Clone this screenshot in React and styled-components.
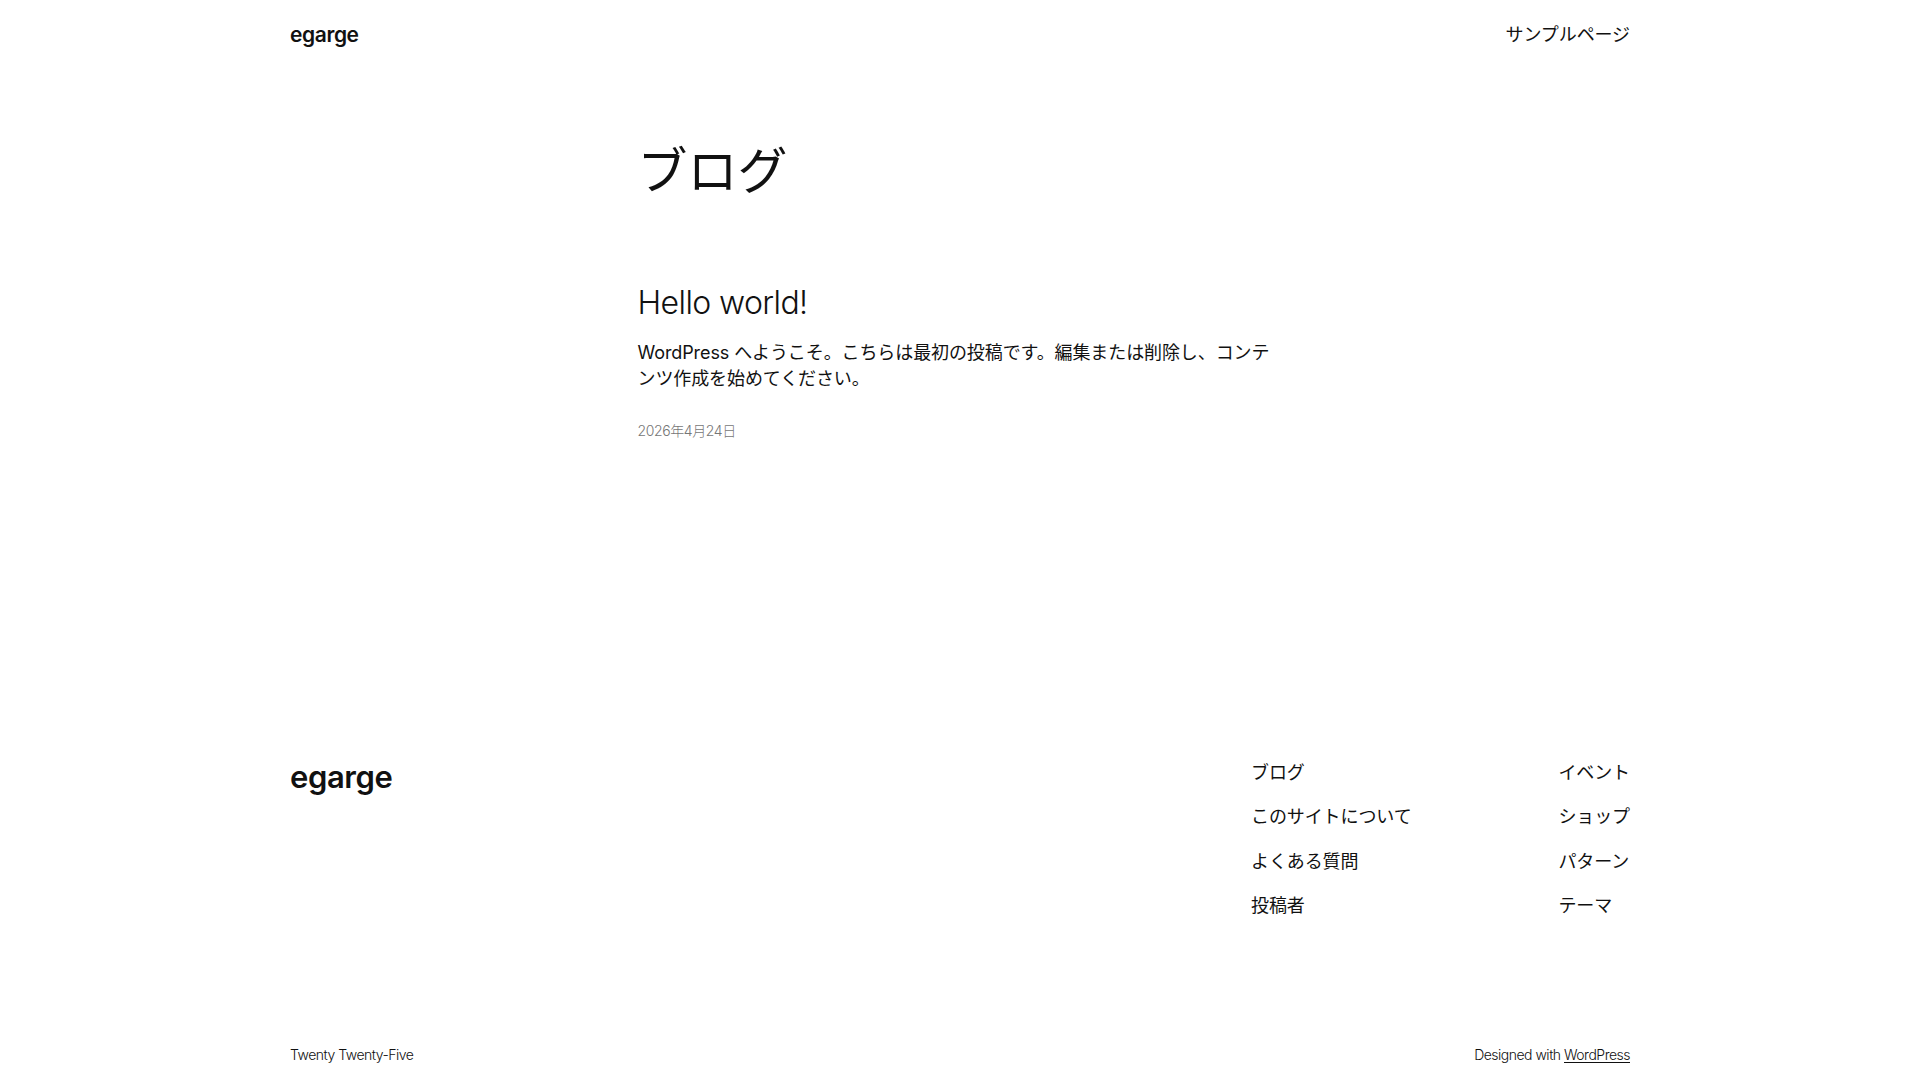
import React from 'react';
import styled, { createGlobalStyle } from 'styled-components';

const GlobalStyle = createGlobalStyle`
  html, body {
    margin: 0;
    padding: 0;
    background: #ffffff;
  }
  body {
    font-family: Inter, "Noto Sans CJK JP", sans-serif;
    font-weight: 300;
    color: #111111;
    -webkit-font-smoothing: antialiased;
  }
  a {
    color: inherit;
    text-decoration: none;
  }
`;

const Page = styled.div`
  min-height: 100vh;
  display: flex;
  flex-direction: column;
`;

const Wide = styled.div`
  width: 1340px;
  margin: 0 auto;
`;

const Header = styled(Wide)`
  display: flex;
  align-items: center;
  justify-content: space-between;
  height: 70px;
`;

const SiteTitle = styled.a`
  font-size: ${(p) => (p.big ? '31px' : '21px')};
  font-weight: 600;
  letter-spacing: -0.4px;
  line-height: 1.2;
`;

// nav labels are all Japanese, which renders at regular weight in the reference
const NavLink = styled.a`
  font-size: 18px;
  font-weight: 400;
  letter-spacing: -0.1px;
  line-height: 1.4;
`;

const Main = styled.main`
  width: 645px;
  margin: 0 auto;
  padding-top: 71px;
  flex: 1;
`;

const PageTitle = styled.h1`
  margin: 0;
  font-size: 50px;
  font-weight: 400;
  line-height: 1.2;
  letter-spacing: 0;
`;

const Post = styled.article`
  margin-top: 83px;
`;

const PostTitle = styled.h2`
  margin: 0;
  font-size: 32px;
  font-weight: 300;
  line-height: 1.2;
  letter-spacing: -0.6px;
`;

const Excerpt = styled.p`
  margin: 18px 0 0;
  font-size: 18px;
  font-weight: 400;
  line-height: 26px;
  letter-spacing: -0.1px;
`;

const PostDate = styled.time`
  display: block;
  margin-top: 28px;
  font-size: 14px;
  color: #767676;
  letter-spacing: -0.4px;
`;

const Footer = styled.footer`
  margin-top: 319px;
`;

const FooterTop = styled(Wide)`
  display: flex;
  justify-content: space-between;
  align-items: flex-start;
`;

const FooterBrand = styled.div`
  margin-top: -3px;
`;

const FooterNavs = styled.div`
  display: flex;
  width: 379px;
  justify-content: space-between;
  margin-top: -1px;
`;

const FooterCol = styled.nav`
  display: flex;
  flex-direction: column;
  gap: 19px;
`;

const FooterBottom = styled(Wide)`
  display: flex;
  justify-content: space-between;
  align-items: center;
  margin-top: 110px;
  height: 52px;
  font-size: 14px;
  font-weight: 300;
  letter-spacing: -0.5px;
`;

const Underlined = styled.a`
  text-decoration: underline;
  text-underline-offset: 2px;
`;

const col1 = ['ブログ', 'このサイトについて', 'よくある質問', '投稿者'];
const col2 = ['イベント', 'ショップ', 'パターン', 'テーマ'];

const App = () => {
  return (
    <>
      <GlobalStyle />
      <Page>
        <Header>
          <SiteTitle href="#">egarge</SiteTitle>
          <NavLink href="#">サンプルページ</NavLink>
        </Header>

        <Main>
          <PageTitle>ブログ</PageTitle>
          <Post>
            <PostTitle>Hello world!</PostTitle>
            <Excerpt>
              WordPress へようこそ。こちらは最初の投稿です。編集または削除し、コンテンツ作成を始めてください。
            </Excerpt>
            <PostDate>2026年4月24日</PostDate>
          </Post>
        </Main>

        <Footer>
          <FooterTop>
            <FooterBrand>
              <SiteTitle big href="#">egarge</SiteTitle>
            </FooterBrand>
            <FooterNavs>
              <FooterCol>
                {col1.map((t) => (
                  <NavLink key={t} href="#">{t}</NavLink>
                ))}
              </FooterCol>
              <FooterCol>
                {col2.map((t) => (
                  <NavLink key={t} href="#">{t}</NavLink>
                ))}
              </FooterCol>
            </FooterNavs>
          </FooterTop>
          <FooterBottom>
            <span>Twenty Twenty-Five</span>
            <span>
              Designed with <Underlined href="#">WordPress</Underlined>
            </span>
          </FooterBottom>
        </Footer>
      </Page>
    </>
  );
};

export default App;
